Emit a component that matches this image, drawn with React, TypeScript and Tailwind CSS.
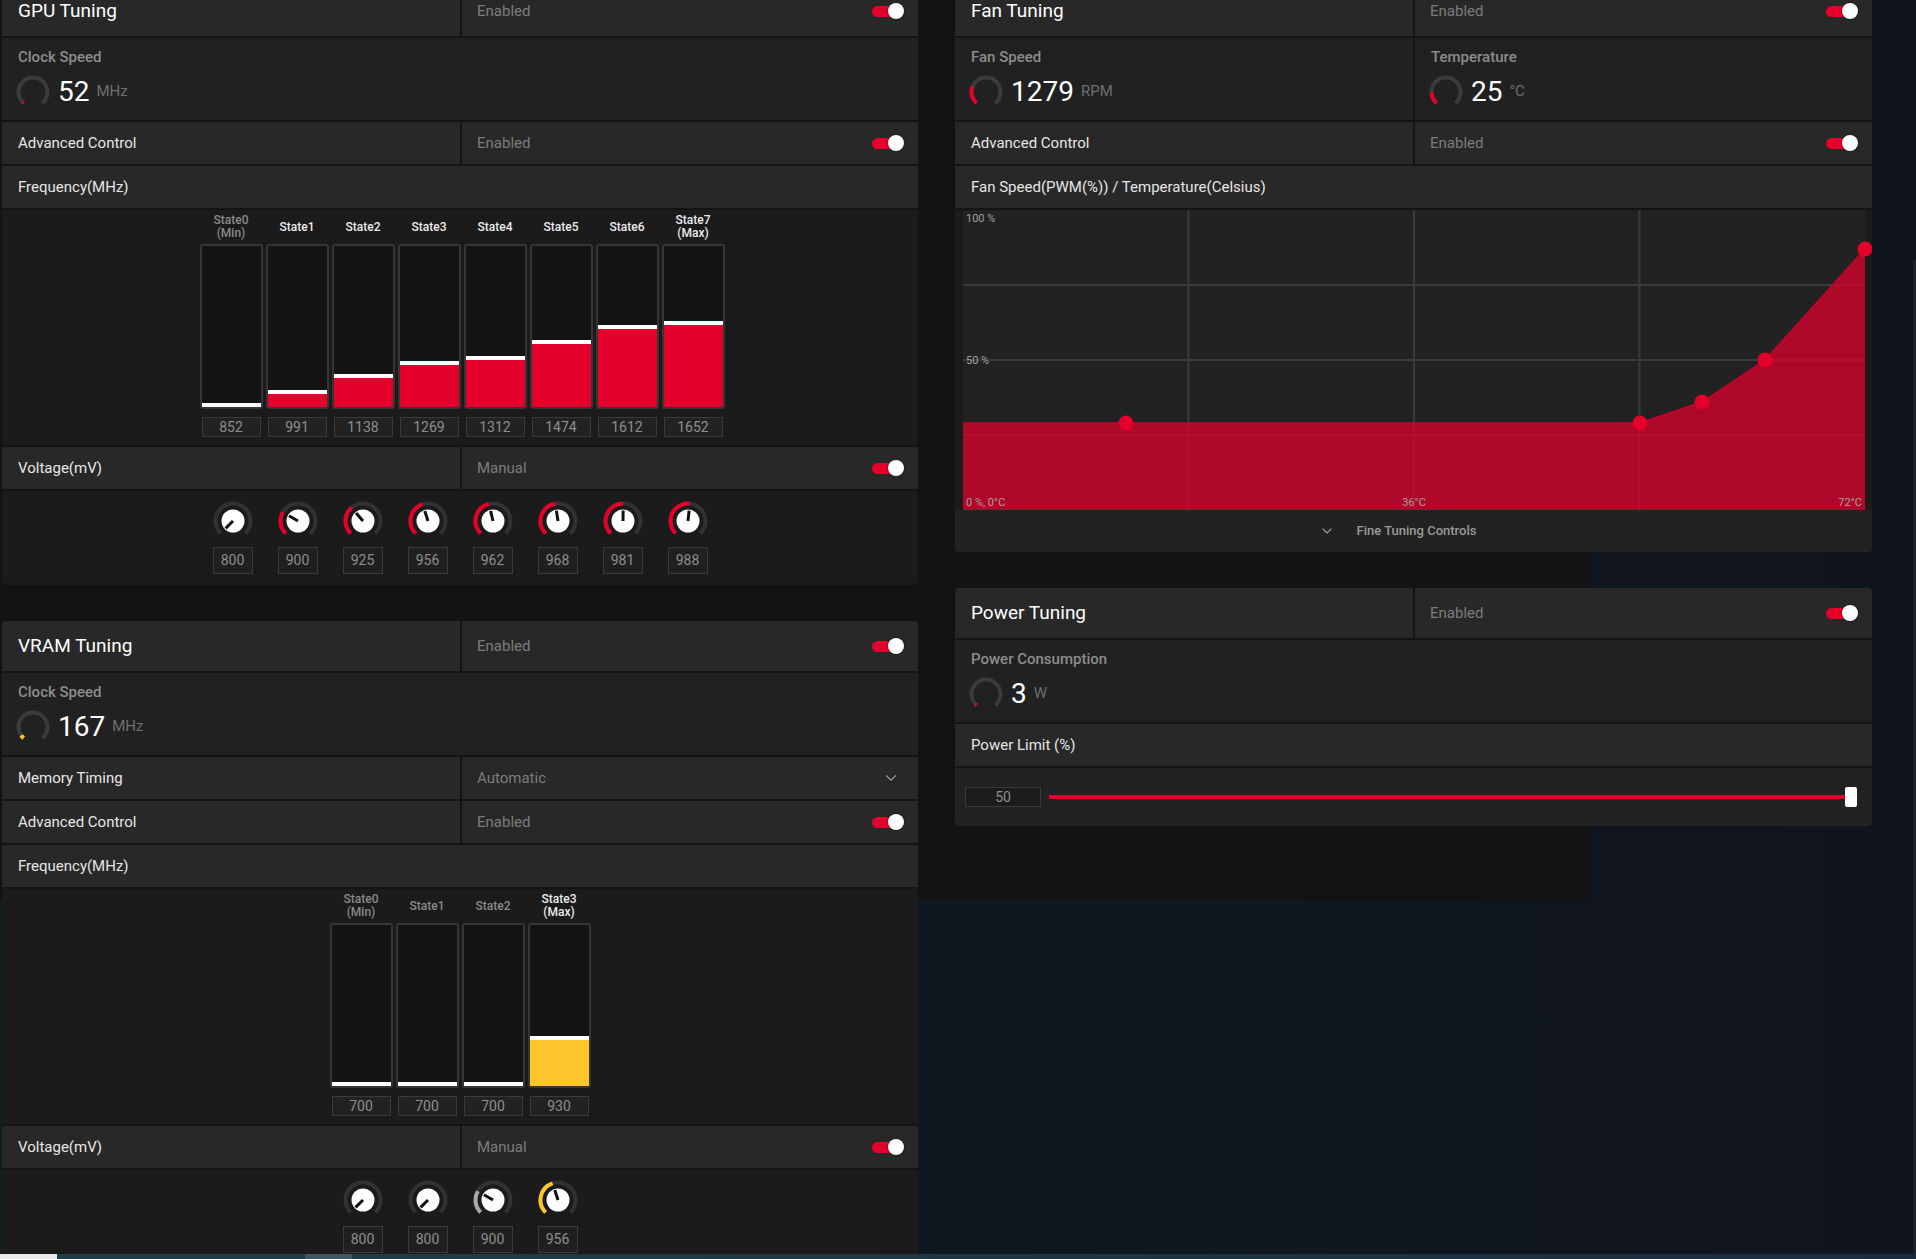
import { ChevronDown } from "lucide-react";
import type { ReactNode } from "react";

const RED = "#e4002b";
const YELLOW = "#fcc72d";

function polar(cx: number, cy: number, r: number, deg: number) {
	const rad = (deg * Math.PI) / 180;
	return [cx + r * Math.sin(rad), cy - r * Math.cos(rad)];
}

function arc(cx: number, cy: number, r: number, from: number, to: number) {
	const [x1, y1] = polar(cx, cy, r, from);
	const [x2, y2] = polar(cx, cy, r, to);
	const large = to - from > 180 ? 1 : 0;
	return `M ${x1} ${y1} A ${r} ${r} 0 ${large} 1 ${x2} ${y2}`;
}

function Toggle() {
	return (
		<div className="relative h-[16px] w-[32px] shrink-0">
			<div className="absolute left-0 top-[3px] h-[11px] w-[28px] rounded-full bg-[#e4002b]" />
			<div className="absolute right-0 top-0 size-[16px] rounded-full bg-white shadow-[0_0_2px_rgba(0,0,0,0.7)]" />
		</div>
	);
}

function SplitRow({
	label,
	value,
	title = false,
	control,
}: {
	label: string;
	value: string;
	title?: boolean;
	control: ReactNode;
}) {
	return (
		<div className={`flex gap-[2px] ${title ? "h-[50px]" : "h-[42px]"}`}>
			<div
				className={`flex w-[458px] shrink-0 items-center bg-[#282828] pl-[16px] ${
					title ? "text-[19px] text-white" : "text-[15px] text-[#e6e6e6]"
				}`}
			>
				{label}
			</div>
			<div className="flex flex-1 items-center justify-between bg-[#282828] pl-[15px] pr-[14px] text-[15px] text-[#7c7c7c]">
				<span>{value}</span>
				{control}
			</div>
		</div>
	);
}

function LabelRow({ children }: { children: ReactNode }) {
	return (
		<div className="flex h-[42px] items-center bg-[#282828] pl-[16px] text-[15px] text-[#e6e6e6]">
			{children}
		</div>
	);
}

function Gauge({ to, color }: { to: number; color: string }) {
	return (
		<svg width="34" height="34" viewBox="0 0 34 34" className="-ml-[2px] shrink-0">
			<path d={arc(17, 17, 14.5, -140, 140)} fill="none" stroke="#3b3b3b" strokeWidth="4" />
			<path d={arc(17, 17, 14.5, -140, to)} fill="none" stroke={color} strokeWidth="4" />
		</svg>
	);
}

function Readout({
	label,
	value,
	unit,
	to,
	color = RED,
	size = "w-full",
}: {
	label: string;
	value: string;
	unit: string;
	to: number;
	color?: string;
	size?: string;
}) {
	return (
		<div className={`h-[82px] shrink-0 bg-[#212121] pl-[16px] pt-[9px] ${size}`}>
			<div className="text-[15px] font-medium leading-[20px] text-[#8c8c8c]">{label}</div>
			<div className="mt-[8px] flex items-center">
				<Gauge to={to} color={color} />
				<span className="ml-[8px] text-[28px] leading-[34px] text-white">{value}</span>
				<span className="-mt-[1px] ml-[7px] text-[15px] text-[#6e6e6e]">{unit}</span>
			</div>
		</div>
	);
}

type Bar = { label: string[]; value: number; h: number; on: boolean };

function FreqBars({ bars, yellow = false }: { bars: Bar[]; yellow?: boolean }) {
	return (
		<div
			className={`flex h-[235px] shrink-0 justify-center gap-[3px] bg-[#1b1b1b] pt-[2px] ${
				yellow ? "pl-0" : "pl-[4px]"
			}`}
		>
			{bars.map((b) => (
				<div key={b.label[0]} className="flex w-[63px] flex-col items-center">
					<div
						className={`flex h-[30px] flex-col items-center justify-center text-[12px] font-medium leading-[13px] ${
							b.on ? "text-[#ececec]" : "text-[#8a8a8a]"
						}`}
					>
						{b.label.map((l) => (
							<span key={l}>{l}</span>
						))}
					</div>
					<div className="mt-[2px] flex h-[165px] w-[63px] flex-col justify-end rounded-[3px] border-2 border-[#363636] bg-[#141414]">
						<div
							className={`border-t-4 border-white ${yellow ? "bg-[#fcc72d]" : "bg-[#e4002b]"}`}
							style={{ height: b.h }}
						/>
					</div>
					<div className="mt-[8px] flex h-[20px] w-[59px] items-center justify-center border border-[#3a3a3a] bg-[#222222] text-[14px] text-[#8e8e8e]">
						{b.value}
					</div>
				</div>
			))}
		</div>
	);
}

function Knob({ value, color }: { value: number; color: string }) {
	const a = -135 + (value - 800) * 0.75;
	const [px, py] = polar(20, 20, 10.5, a);
	return (
		<svg width="40" height="40" viewBox="0 0 40 40">
			<path d={arc(20, 20, 17.5, -135, 135)} fill="none" stroke="#323232" strokeWidth="4" />
			{a > -135 && <path d={arc(20, 20, 17.5, -135, a)} fill="none" stroke={color} strokeWidth="4" />}
			<circle cx="20" cy="20" r="11.5" fill="#ffffff" />
			<line x1="20" y1="20" x2={px} y2={py} stroke="#111111" strokeWidth="3" />
		</svg>
	);
}

function KnobRow({ knobs }: { knobs: { value: number; color: string }[] }) {
	return (
		<div className="flex h-[94px] shrink-0 justify-center gap-[25px] bg-[#1b1b1b] pt-[10px]">
			{knobs.map((k, i) => (
				<div key={i} className="flex w-[40px] flex-col items-center">
					<Knob value={k.value} color={k.color} />
					<div className="mt-[6px] flex h-[27px] w-[40px] items-center justify-center border border-[#3a3a3a] bg-[#202020] text-[14px] text-[#8e8e8e]">
						{k.value}
					</div>
				</div>
			))}
		</div>
	);
}

function Panel({ children }: { children: ReactNode }) {
	return <div className="flex flex-col gap-[2px] overflow-hidden rounded-[4px] bg-[#141414]">{children}</div>;
}

function FanChart() {
	const pts = [
		[163, 213],
		[677, 213],
		[739, 192],
		[802, 150],
		[902, 39],
	];
	return (
		<svg width="902" height="300" viewBox="0 0 902 300" className="block overflow-visible">
			<rect width="902" height="300" fill="#222222" />
			{[225.5, 451, 676.5].map((x) => (
				<line key={x} x1={x} x2={x} y1={0} y2={300} stroke="#3b3b3b" strokeWidth="2" />
			))}
			{[75, 150, 225].map((y) => (
				<line key={y} x1={0} x2={902} y1={y} y2={y} stroke="#3b3b3b" strokeWidth="2" />
			))}
			<path d="M0 213 L677 213 L739 192 L802 150 L902 39 L902 300 L0 300 Z" fill={RED} fillOpacity="0.72" />
			<path d="M0 213 L677 213 L739 192 L802 150 L902 39" fill="none" stroke="#c9002a" strokeWidth="1.5" />
			{pts.map(([x, y]) => (
				<circle key={x} cx={x} cy={y} r="7.5" fill={RED} />
			))}
			<g fontSize="11" fill="#a0a0a0" fontFamily="Roboto, sans-serif">
				<text x="3" y="12">100 %</text>
				<text x="3" y="154">50 %</text>
				<text x="3" y="296">0 %, 0°C</text>
				<text x="451" y="296" textAnchor="middle">36°C</text>
				<text x="899" y="296" textAnchor="end">72°C</text>
			</g>
		</svg>
	);
}

const gpuBars: Bar[] = [
	{ label: ["State0", "(Min)"], value: 852, h: 4, on: false },
	{ label: ["State1"], value: 991, h: 17, on: true },
	{ label: ["State2"], value: 1138, h: 33, on: true },
	{ label: ["State3"], value: 1269, h: 46, on: true },
	{ label: ["State4"], value: 1312, h: 51, on: true },
	{ label: ["State5"], value: 1474, h: 67, on: true },
	{ label: ["State6"], value: 1612, h: 82, on: true },
	{ label: ["State7", "(Max)"], value: 1652, h: 86, on: true },
];

const vramBars: Bar[] = [
	{ label: ["State0", "(Min)"], value: 700, h: 4, on: false },
	{ label: ["State1"], value: 700, h: 4, on: false },
	{ label: ["State2"], value: 700, h: 4, on: false },
	{ label: ["State3", "(Max)"], value: 930, h: 50, on: true },
];

const gpuKnobs = [800, 900, 925, 956, 962, 968, 981, 988].map((value) => ({ value, color: RED }));
const vramKnobs = [
	{ value: 800, color: RED },
	{ value: 800, color: RED },
	{ value: 900, color: "#a8a8a8" },
	{ value: 956, color: YELLOW },
];

export default function App() {
	return (
		<div className="flex h-[1259px] w-[1916px] flex-col overflow-hidden bg-[#0f1922] bg-[image:linear-gradient(#131313,#131313),linear-gradient(to_right,#0f1d25,#10141e)] bg-[length:1590px_900px,100%_100%] bg-no-repeat font-[family-name:Roboto,sans-serif]">
			<div className="flex h-[1254px] items-start overflow-hidden pl-[2px]">
				{/* left column */}
				<div className="-mt-[14px] flex w-[916px] shrink-0 flex-col gap-[36px]">
					<Panel>
						<SplitRow title label="GPU Tuning" value="Enabled" control={<Toggle />} />
						<Readout label="Clock Speed" value="52" unit="MHz" to={-134} />
						<SplitRow label="Advanced Control" value="Enabled" control={<Toggle />} />
						<LabelRow>Frequency(MHz)</LabelRow>
						<FreqBars bars={gpuBars} />
						<SplitRow label="Voltage(mV)" value="Manual" control={<Toggle />} />
						<KnobRow knobs={gpuKnobs} />
					</Panel>

					<Panel>
						<SplitRow title label="VRAM Tuning" value="Enabled" control={<Toggle />} />
						<Readout label="Clock Speed" value="167" unit="MHz" to={-125} color={YELLOW} />
						<SplitRow
							label="Memory Timing"
							value="Automatic"
							control={<ChevronDown size={18} strokeWidth={1.5} className="mr-[4px] text-[#9a9a9a]" />}
						/>
						<SplitRow label="Advanced Control" value="Enabled" control={<Toggle />} />
						<LabelRow>Frequency(MHz)</LabelRow>
						<FreqBars bars={vramBars} yellow />
						<SplitRow label="Voltage(mV)" value="Manual" control={<Toggle />} />
						<KnobRow knobs={vramKnobs} />
					</Panel>
				</div>

				{/* right column */}
				<div className="-mt-[14px] ml-[37px] flex w-[917px] shrink-0 flex-col gap-[36px]">
					<Panel>
						<SplitRow title label="Fan Tuning" value="Enabled" control={<Toggle />} />
						<div className="flex gap-[2px]">
							<Readout size="w-[458px]" label="Fan Speed" value="1279" unit="RPM" to={-68} />
							<Readout size="flex-1" label="Temperature" value="25" unit="°C" to={-92} />
						</div>
						<SplitRow label="Advanced Control" value="Enabled" control={<Toggle />} />
						<LabelRow>Fan Speed(PWM(%)) / Temperature(Celsius)</LabelRow>
						<div>
							<div className="bg-[#1b1b1b] pl-[8px] pr-[7px]">
								<FanChart />
							</div>
							<div className="flex h-[42px] items-center justify-center gap-[22px] bg-[#222222] pr-[32px]">
								<ChevronDown size={16} strokeWidth={1.75} className="text-[#9a9a9a]" />
								<span className="text-[13px] font-medium text-[#9a9a9a]">Fine Tuning Controls</span>
							</div>
						</div>
					</Panel>

					<Panel>
						<SplitRow title label="Power Tuning" value="Enabled" control={<Toggle />} />
						<Readout label="Power Consumption" value="3" unit="W" to={-134} />
						<LabelRow>Power Limit (%)</LabelRow>
						<div className="flex h-[58px] items-center bg-[#222222] pl-[10px] pr-[15px]">
							<div className="flex h-[20px] w-[76px] items-center justify-center border border-[#3a3a3a] bg-[#1c1c1c] text-[14px] text-[#8e8e8e]">
								50
							</div>
							<div className="ml-[8px] h-[4px] flex-1 bg-[#e4002b]" />
							<div className="-ml-[1px] h-[20px] w-[12px] rounded-[2px] bg-white" />
						</div>
					</Panel>
				</div>

				<div className="ml-auto mt-[260px] w-[3px] self-stretch bg-[#1c2430]" />
			</div>

			{/* bottom strip */}
			<div className="flex h-[5px]">
				<div className="w-[57px] bg-[#e8e8e8]" />
				<div className="w-[248px] bg-[#203c46]" />
				<div className="w-[47px] bg-[#3e5660]" />
				<div className="flex-1 bg-[linear-gradient(to_right,#203c46,#1a2c3e)]" />
			</div>
		</div>
	);
}
